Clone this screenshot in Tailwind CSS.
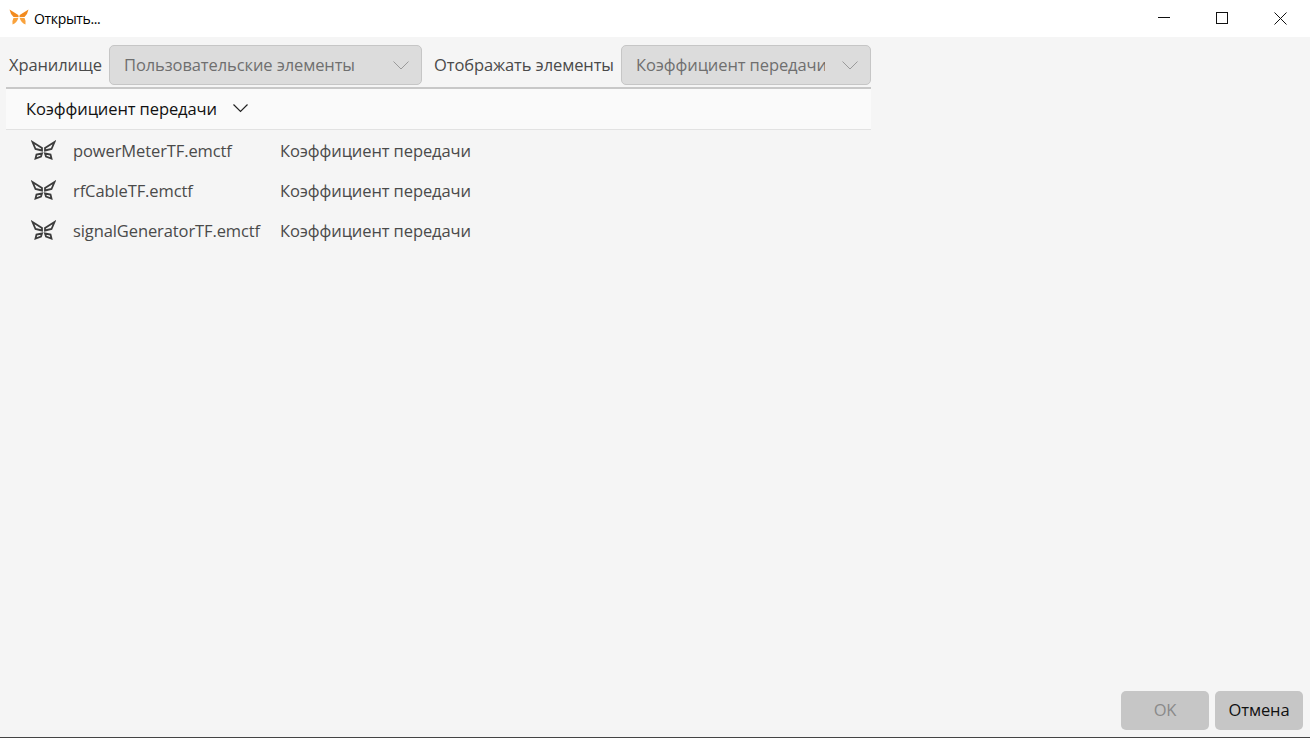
<!DOCTYPE html>
<html lang="ru">
<head>
  <meta charset="UTF-8">
  <title>Открыть...</title>
  <script src="https://cdn.jsdelivr.net/npm/@tailwindcss/browser@4"></script>
</head>
<body class="h-[738px] w-[1310px] overflow-hidden bg-[#f5f5f5] font-['Open_Sans',sans-serif] flex flex-col">
  <!-- title bar -->
  <div class="h-[37px] bg-white flex items-center shrink-0">
    <svg class="ml-[9px] w-[20px] h-[16px] mb-[3px]" viewBox="0 0 20 16">
      <path d="M0.500 0.500 L9.300 6 L9.600 8 L4.500 8 Q1.500 5.500 0.500 0.500 Z" fill="#f28a1e"/>
      <path d="M19.500 0.500 L10.700 6 L10.400 8 L15.500 8 Q18.500 5.500 19.500 0.500 Z" fill="#f28a1e"/>
      <path d="M9.400 8.800 L4.500 9 Q3 11.500 3.500 15.500 Q8 14 9.400 8.800 Z" fill="#f9a23c"/>
      <path d="M10.600 8.800 L15.500 9 Q17 11.500 16.500 15.500 Q12 14 10.600 8.800 Z" fill="#f9a23c"/>
    </svg>
    <span class="ml-[5px] text-[14px] tracking-[-0.35px] text-black mb-[1px]">Открыть...</span>
    <div class="ml-auto flex items-center mb-px">
      <svg class="w-[12px] h-[12px] mr-[46px]" viewBox="0 0 12 12"><path d="M0 5.500 H12" stroke="#111" stroke-width="1"/></svg>
      <svg class="w-[12px] h-[12px] mr-[46px]" viewBox="0 0 12 12"><rect x="0.500" y="0.500" width="11" height="11" fill="none" stroke="#111" stroke-width="1"/></svg>
      <svg class="w-[13px] h-[13px] mr-[23px]" viewBox="0 0 13 13"><path d="M0.500 0.500 L12.500 12.500 M12.500 0.500 L0.500 12.500" stroke="#111" stroke-width="1"/></svg>
    </div>
  </div>

  <div class="flex-1 flex flex-col min-h-0">
    <!-- filters -->
    <div class="w-[871px] flex items-center pt-[8px] pl-[9px] h-[48px] text-[16.500px] tracking-[-0.1px] text-[#4a4a4a]">
      <span class="w-[100px] shrink-0">Хранилище</span>
      <div class="w-[313px] h-[40px] shrink-0 rounded-[5px] border border-[#c6c6c6] bg-[#dcdcdc] flex items-center pl-[14px] pr-[12px] text-[#6f6f6f]">
        <span class="flex-1">Пользовательские элементы</span>
        <svg class="w-[16px] h-[9px]" viewBox="0 0 16 9"><path d="M0.500 0.500 L8 8 L15.500 0.500" fill="none" stroke="#9a9a9a" stroke-width="1"/></svg>
      </div>
      <span class="ml-[12px] w-[187px] shrink-0 whitespace-nowrap">Отображать элементы</span>
      <div class="w-[250px] h-[40px] shrink-0 rounded-[5px] border border-[#c6c6c6] bg-[#dcdcdc] flex items-center pl-[14px] pr-[12px] text-[#6f6f6f]">
        <span class="w-[189px] overflow-hidden whitespace-nowrap">Коэффициент передачи</span>
        <svg class="ml-auto w-[16px] h-[9px]" viewBox="0 0 16 9"><path d="M0.500 0.500 L8 8 L15.500 0.500" fill="none" stroke="#9a9a9a" stroke-width="1"/></svg>
      </div>
    </div>

    <!-- list -->
    <div class="w-[865px] ml-[6px] mt-[2px] border-t-2 border-[#c8c8c8]">
      <div class="h-[41px] bg-[#fafafa] border-b border-[#e2e2e2] flex items-center pl-[20px] text-[16.500px] tracking-[-0.1px] text-[#111]">
        <span class="w-[191px] whitespace-nowrap">Коэффициент передачи</span>
        <svg class="ml-[16px] w-[15px] h-[9px] mb-[2px]" viewBox="0 0 15 9"><path d="M0.500 0.500 L7.500 7.500 L14.500 0.500" fill="none" stroke="#222" stroke-width="1.200"/></svg>
      </div>

      <div class="flex items-center h-[40px] mt-[1px] text-[16.500px] tracking-[-0.1px] text-[#4a4a4a]">
        <svg class="ml-[25px] w-[25px] h-[21px] mb-[2px]" viewBox="0 0 25 21">
          <g fill="none" stroke="#3c3c3c" stroke-width="1.800" stroke-linejoin="miter">
            <path d="M1.500 2 L11 8 L11 10.500 L4.500 9 Z"/>
            <path d="M23.500 2 L14 8 L14 10.500 L20.500 9 Z"/>
            <path d="M11 13.500 L5.500 14.500 L4.500 18.500 L10 16.500 Z"/>
            <path d="M14 13.500 L19.500 14.500 L20.500 18.500 L15 16.500 Z"/>
          </g>
        </svg>
        <span class="ml-[17px] w-[207px] whitespace-nowrap">powerMeterTF.emctf</span>
        <span class="whitespace-nowrap">Коэффициент передачи</span>
      </div>
      <div class="flex items-center h-[40px] text-[16.500px] tracking-[-0.1px] text-[#4a4a4a]">
        <svg class="ml-[25px] w-[25px] h-[21px] mb-[2px]" viewBox="0 0 25 21">
          <g fill="none" stroke="#3c3c3c" stroke-width="1.800" stroke-linejoin="miter">
            <path d="M1.500 2 L11 8 L11 10.500 L4.500 9 Z"/>
            <path d="M23.500 2 L14 8 L14 10.500 L20.500 9 Z"/>
            <path d="M11 13.500 L5.500 14.500 L4.500 18.500 L10 16.500 Z"/>
            <path d="M14 13.500 L19.500 14.500 L20.500 18.500 L15 16.500 Z"/>
          </g>
        </svg>
        <span class="ml-[17px] w-[207px] whitespace-nowrap">rfCableTF.emctf</span>
        <span class="whitespace-nowrap">Коэффициент передачи</span>
      </div>
      <div class="flex items-center h-[40px] text-[16.500px] tracking-[-0.1px] text-[#4a4a4a]">
        <svg class="ml-[25px] w-[25px] h-[21px] mb-[2px]" viewBox="0 0 25 21">
          <g fill="none" stroke="#3c3c3c" stroke-width="1.800" stroke-linejoin="miter">
            <path d="M1.500 2 L11 8 L11 10.500 L4.500 9 Z"/>
            <path d="M23.500 2 L14 8 L14 10.500 L20.500 9 Z"/>
            <path d="M11 13.500 L5.500 14.500 L4.500 18.500 L10 16.500 Z"/>
            <path d="M14 13.500 L19.500 14.500 L20.500 18.500 L15 16.500 Z"/>
          </g>
        </svg>
        <span class="ml-[17px] w-[207px] whitespace-nowrap">signalGeneratorTF.emctf</span>
        <span class="whitespace-nowrap">Коэффициент передачи</span>
      </div>
    </div>

    <!-- footer buttons -->
    <div class="mt-auto flex justify-end gap-[6px] pr-[7px] pb-[7px] text-[16.500px] tracking-[-0.1px]">
      <div class="w-[88px] h-[39px] rounded-[5px] bg-[#c6c6c6] text-[#8a8a8a] flex items-center justify-center">OK</div>
      <div class="w-[88px] h-[39px] rounded-[5px] bg-[#c6c6c6] text-[#111] flex items-center justify-center">Отмена</div>
    </div>
  </div>
  <div class="h-px bg-[#444] shrink-0"></div>
</body>
</html>
